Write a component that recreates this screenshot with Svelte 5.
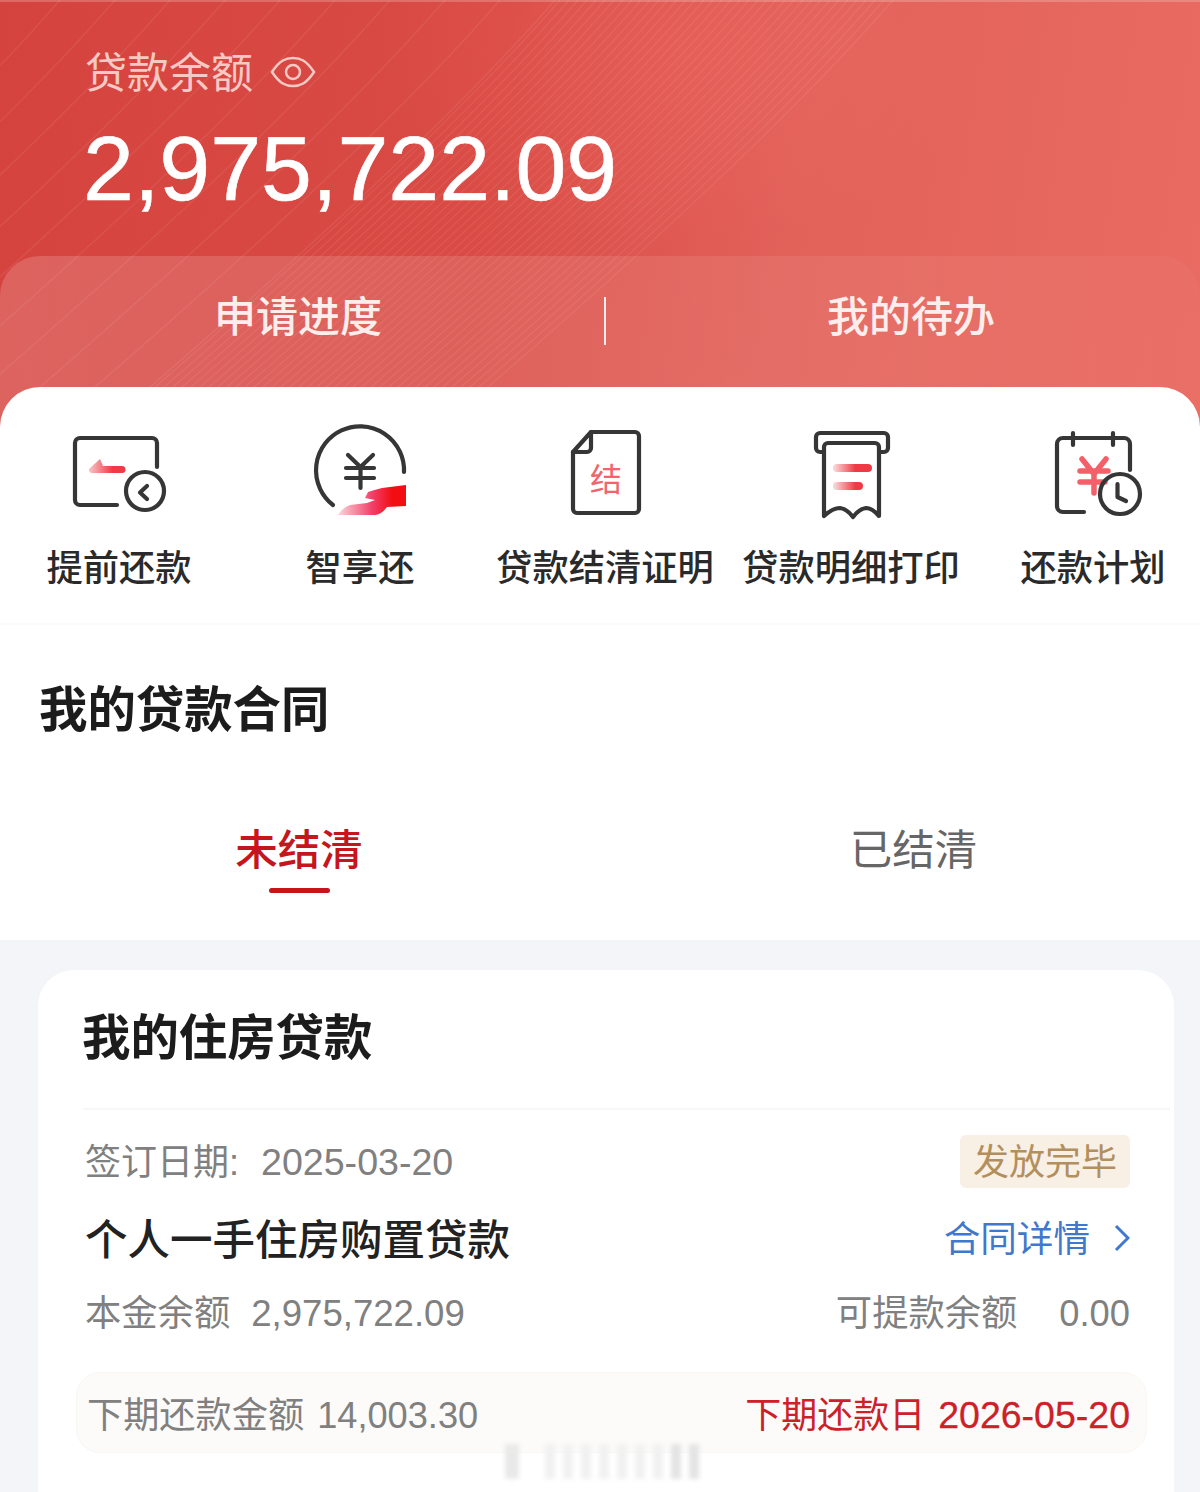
<script>
  // decorative strands across the red header: sparse on the left, dense near the edge
  const ends = [
    ...Array.from({ length: 10 }, (_, i) => 60 + i * 55),
    ...Array.from({ length: 38 }, (_, i) => 560 + i * 9)
  ];
  const strands = ends.map((e) => `M${e - 420} 400 Q${e - 130} 150 ${e} 0`);

  const barcode = [0, 1, 2, 3, 4, 5, 6, 7, 8];
</script>

<svg width="0" height="0" class="defs" aria-hidden="true">
  <defs>
    <linearGradient id="redFade" x1="0" y1="0" x2="1" y2="0">
      <stop offset="0" stop-color="#fbc4c8" />
      <stop offset="0.65" stop-color="#ee3a44" />
    </linearGradient>
    <linearGradient id="barFade" gradientUnits="userSpaceOnUse" x1="44" y1="0" x2="78" y2="0">
      <stop offset="0" stop-color="#fbd0d2" />
      <stop offset="0.6" stop-color="#ee3a44" />
    </linearGradient>
    <linearGradient id="handFade" x1="0" y1="0" x2="1" y2="0">
      <stop offset="0" stop-color="#fcd6dc" />
      <stop offset="0.5" stop-color="#f2406a" />
      <stop offset="0.8" stop-color="#f20d12" />
    </linearGradient>
  </defs>
</svg>

<div class="page">
  <header class="hero">
    <svg class="strands" viewBox="0 0 1200 430" width="1200" height="430" aria-hidden="true">
      {#each strands as d}
        <path {d} />
      {/each}
    </svg>
    <div class="hero-label">
      <span>贷款余额</span>
      <svg width="46" height="32" viewBox="0 0 46 32" fill="none" stroke="#f6c9c5" stroke-width="2.5">
        <path d="M2 16 C10 4 16 2 23 2 C30 2 36 4 44 16 C36 28 30 30 23 30 C16 30 10 28 2 16 Z" />
        <circle cx="23" cy="16" r="7" />
      </svg>
    </div>
    <div class="hero-amount">2,975,722.09</div>
    <div class="hero-panel">
      <div class="panel-left">申请进度</div>
      <div class="panel-divider"></div>
      <div class="panel-right">我的待办</div>
    </div>
  </header>

  <section class="sheet">
    <div class="shortcuts">
      <div class="shortcut">
        <svg class="icon" viewBox="0 0 120 100" fill="none">
          <path class="ink" d="M98 42 V18 a5 5 0 0 0 -5 -5 H21 a5 5 0 0 0 -5 5 V75 a5 5 0 0 0 5 5 H58" />
          <circle class="ink" cx="86" cy="66" r="19" />
          <path class="ink" d="M88 61 L81 67.5 L88 74" />
          <path fill="url(#redFade)" d="M30 44 L41 34 L44 41 H63 a3.5 3.5 0 0 1 0 7 H33 a3 3 0 0 1 -3 -4 Z" />
        </svg>
        <span>提前还款</span>
      </div>
      <div class="shortcut">
        <svg class="icon" viewBox="0 0 120 100" fill="none">
          <path class="ink" d="M104 47 A44 44 0 1 0 33 80" />
          <path class="ink" d="M48 30 L60.5 42 L73 30 M46 43 H74 M46 53 H74 M60.5 42 V63" />
          <path fill="url(#handFade)" d="M106 60 V81 L87 82 Q81 90 75 90 H38 Q43 82 50 80 L67 78 L75 75 L65 73 L68 67 Q74 65 82 63 Z" />
        </svg>
        <span>智享还</span>
      </div>
      <div class="shortcut">
        <svg class="icon" viewBox="0 0 120 100" fill="none">
          <path class="ink" d="M46 7 H90 a4 4 0 0 1 4 4 V84 a4 4 0 0 1 -4 4 H32 a4 4 0 0 1 -4 -4 V27 Z" />
          <path class="ink" d="M46 7 V23 a4 4 0 0 1 -4 4 H28" />
          <text class="doc-char" x="61" y="66" text-anchor="middle">结</text>
        </svg>
        <span>贷款结清证明</span>
      </div>
      <div class="shortcut">
        <svg class="icon" viewBox="0 0 120 100" fill="none">
          <path class="ink" d="M33 27 H29 a4 4 0 0 1 -4 -4 V12 a4 4 0 0 1 4 -4 H93 a4 4 0 0 1 4 4 V23 a4 4 0 0 1 -4 4 H88" />
          <path class="ink" d="M33 91 V22 a4 4 0 0 1 4 -4 H84 a4 4 0 0 1 4 4 V91 Q81 83 75 83 Q68 84 62 92 Q56 84 49 83 Q42 83 33 91 Z" />
          <path class="bar" d="M46 43 H77 M46 61 H68" />
        </svg>
        <span>贷款明细打印</span>
      </div>
      <div class="shortcut">
        <svg class="icon" viewBox="0 0 120 100" fill="none">
          <path class="ink" d="M97 45 V19 a6 6 0 0 0 -6 -6 H30 a6 6 0 0 0 -6 6 V81 a6 6 0 0 0 6 6 H51" />
          <path class="ink" d="M40 8 V20 M80 8 V20" />
          <path class="yen" d="M49 34 L61 49 L73 34 M47 46 H75 M47 57 H72 M61 49 V68" />
          <circle class="ink" cx="87" cy="69" r="20" />
          <path class="ink" d="M84.5 59 V72 L93 76" />
        </svg>
        <span>还款计划</span>
      </div>
    </div>

    <h2 class="contracts-title">我的贷款合同</h2>

    <div class="tabs">
      <div class="tab tab-active">未结清</div>
      <div class="tab">已结清</div>
    </div>
  </section>

  <main class="content">
    <article class="card">
      <h3 class="card-title">我的住房贷款</h3>
      <div class="card-rule"></div>
      <div class="card-body">
        <div class="row row-sign">
          <div class="muted">签订日期:<span class="sign-date">2025-03-20</span></div>
          <div class="tag">发放完毕</div>
        </div>
        <div class="row row-name">
          <div class="loan-name">个人一手住房购置贷款</div>
          <div class="detail-link">
            合同详情
            <svg width="16" height="30" viewBox="0 0 16 30" fill="none" stroke="#3f78cc" stroke-width="3">
              <path d="M2 3 L14 15 L2 27" />
            </svg>
          </div>
        </div>
        <div class="row row-balance muted">
          <div>本金余额<span class="principal">2,975,722.09</span></div>
          <div>可提款余额<span class="available">0.00</span></div>
        </div>
        <div class="next-box">
          <div class="muted">下期还款金额 14,003.30</div>
          <div class="next-date">下期还款日<span>2026-05-20</span></div>
        </div>
      </div>
    </article>
  </main>

  <div class="watermark" aria-hidden="true">
    <i class="mark-first"></i>
    {#each barcode as n}
      <i class="mark-bar" class:mark-dark={n > 6}></i>
    {/each}
  </div>
</div>

<style>
  :global(body) {
    margin: 0;
    background: #f3f5f8;
  }

  .defs {
    position: absolute;
  }

  .page {
    position: relative;
    width: 1200px;
    height: 1492px;
    overflow: hidden;
    background: #f3f5f8;
    font-family: "Liberation Sans", "Noto Sans CJK SC", sans-serif;
    font-size: 36px;
  }

  .hero {
    position: relative;
    height: 430px;
    padding-top: 44px;
    box-sizing: border-box;
    background:
      radial-gradient(ellipse 300px 200px at 680px 50px, rgba(255, 120, 110, 0.22), transparent),
      linear-gradient(98deg, #d5433e 0%, #da4b45 40%, #e2625a 66%, #e96b61 100%);
    box-shadow: inset 0 2px 0 rgba(255, 255, 255, 0.2);
    overflow: hidden;
  }

  .strands {
    position: absolute;
    inset: 0;
  }

  .strands path {
    fill: none;
    stroke: #ffffff;
    stroke-opacity: 0.08;
    stroke-width: 1.3;
  }

  .hero-label {
    position: relative;
    display: flex;
    align-items: center;
    gap: 17px;
    padding-left: 85px;
    height: 50px;
    font-size: 42px;
    color: #f6c9c5;
  }

  .hero-label svg {
    margin-top: 6px;
  }

  .hero-amount {
    position: relative;
    margin-top: 24px;
    padding-left: 83px;
    height: 100px;
    line-height: 100px;
    font-size: 91.5px;
    color: #fff;
    -webkit-text-stroke: 0.6px #fff;
  }

  .hero-panel {
    position: relative;
    margin-top: 38px;
    height: 174px;
    padding-bottom: 60px;
    box-sizing: border-box;
    display: grid;
    grid-template-columns: 604px 2px 1fr;
    align-items: center;
    border-radius: 40px 40px 0 0;
    background: linear-gradient(90deg, rgba(255, 255, 255, 0.17), rgba(255, 255, 255, 0.03));
    font-size: 42px;
    font-weight: 500;
    color: #fdeeed;
    text-align: center;
  }

  .panel-left {
    padding-right: 8px;
  }

  .panel-right {
    padding-left: 16px;
  }

  .panel-divider {
    height: 48px;
    margin-top: 16px;
    background: #fdeeed;
  }

  .sheet {
    position: relative;
    margin-top: -43px;
    height: 553px;
    background: #fff;
    border-radius: 40px 40px 0 0;
  }

  .shortcuts {
    display: grid;
    grid-template-columns: 238px 244px 246px 246px 238px;
    height: 238px;
    padding-top: 38px;
    box-sizing: border-box;
    border-bottom: 2px solid #fafafa;
  }

  .shortcut {
    display: flex;
    flex-direction: column;
    align-items: center;
    color: #2a2a2a;
    white-space: nowrap;
  }

  .shortcut span {
    margin-top: 19px;
    line-height: 50px;
    font-size: 36.3px;
    font-weight: 500;
  }

  .icon {
    width: 120px;
    height: 100px;
    flex: none;
    overflow: visible;
  }

  .ink {
    stroke: #363636;
    stroke-width: 4.2;
    stroke-linecap: round;
    stroke-linejoin: round;
  }

  .bar {
    stroke: url(#barFade);
    stroke-width: 8;
    stroke-linecap: round;
  }

  .yen {
    stroke: #f4606a;
    stroke-width: 5.5;
    stroke-linecap: round;
    stroke-linejoin: round;
  }

  .doc-char {
    font-size: 32px;
    fill: #f2636b;
  }

  .contracts-title {
    margin: 55px 0 0;
    padding-left: 39px;
    line-height: 60px;
    font-size: 48.4px;
    font-weight: 700;
    color: #1c1c1c;
  }

  .tabs {
    display: grid;
    grid-template-columns: 598px 1fr;
    margin-top: 86px;
    text-align: center;
    font-size: 42.5px;
    color: #666;
  }

  .tab {
    position: relative;
    line-height: 50px;
  }

  .tab:last-child {
    padding-left: 29px;
  }

  .tab-active {
    color: #c4161c;
    font-weight: 500;
  }

  .tab-active::after {
    content: "";
    position: absolute;
    left: 269px;
    top: 62px;
    width: 61px;
    height: 5px;
    border-radius: 3px;
    background: #c4161c;
  }

  .content {
    padding: 30px 26px 0 38px;
  }

  .card {
    background: #fff;
    border-radius: 36px;
    height: 600px;
  }

  .card-title {
    margin: 0;
    padding: 38px 0 0 44px;
    height: 138px;
    box-sizing: border-box;
    line-height: 60px;
    font-size: 48.4px;
    font-weight: 700;
    color: #1c1c1c;
  }

  .card-rule {
    height: 2px;
    margin: 0 4px 0 45px;
    background: #f7f7f7;
  }

  .card-body {
    padding: 24px 44px 0 47px;
  }

  .row {
    display: flex;
    justify-content: space-between;
    align-items: center;
  }

  .muted {
    color: #808080;
  }

  .sign-date {
    margin-left: 22px;
    font-size: 37.6px;
  }

  .row-sign {
    height: 54px;
  }

  .row-sign .muted {
    margin-top: -4px;
  }

  .tag {
    width: 170px;
    height: 53px;
    line-height: 55px;
    text-align: center;
    background: #f8efe5;
    border-radius: 6px;
    color: #b38f5e;
  }

  .row-name {
    margin-top: 20px;
    height: 56px;
  }

  .loan-name {
    font-size: 42.5px;
    font-weight: 500;
    color: #222;
  }

  .detail-link {
    display: flex;
    align-items: center;
    gap: 24px;
    font-size: 36.6px;
    color: #3f78cc;
  }

  .detail-link svg {
    margin-top: 4px;
  }

  .row-balance {
    margin-top: 21px;
    height: 50px;
    font-size: 36.3px;
  }

  .principal {
    margin-left: 21px;
    font-size: 36.6px;
  }

  .available {
    margin-left: 42px;
  }

  .next-box {
    display: flex;
    justify-content: space-between;
    align-items: center;
    margin: 37px -17px 0 -9px;
    height: 81px;
    padding: 0 16px 2px 10px;
    box-sizing: border-box;
    background: #fcfbf9;
    border: 1px solid #f9f7f4;
    border-radius: 24px;
  }

  .next-box .muted {
    font-size: 36.2px;
    word-spacing: 3px;
  }

  .next-date {
    color: #cc2128;
  }

  .next-date span {
    margin-left: 13px;
    font-size: 37.5px;
    -webkit-text-stroke: 0.3px #cc2128;
  }

  .watermark {
    position: absolute;
    left: 505px;
    top: 1444px;
    display: flex;
    gap: 8px;
    height: 35px;
    filter: blur(2px);
  }

  .mark-first {
    width: 14px;
    margin-right: 18px;
    background: #e9e9e9;
  }

  .mark-bar {
    width: 10px;
    background: #f1f1f1;
  }

  .mark-dark {
    background: #e4e4e4;
  }
</style>
